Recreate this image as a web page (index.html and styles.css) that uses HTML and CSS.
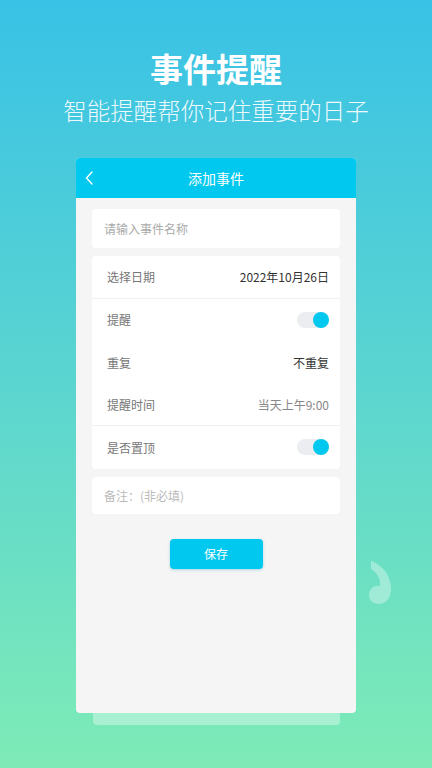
FILE: index.html
```html
<!DOCTYPE html>
<html lang="zh-CN">
<head>
    <meta charset="UTF-8">
    <title>事件提醒</title>
    <link rel="stylesheet" href="styles.css">
</head>
<body>
    <div class="page">
        <div class="hero">
            <h1 class="hero-title">事件提醒</h1>
            <p class="hero-sub">智能提醒帮你记住重要的日子</p>
        </div>

        <div class="phone">
            <div class="card">
                <div class="card-header">
                    <svg class="back" width="9" height="14" viewBox="0 0 9 14">
                        <path d="M7 1 L1.5 7 L7 13" fill="none" stroke="#fff" stroke-width="1.4" stroke-linecap="round" stroke-linejoin="round"/>
                    </svg>
                    <span class="card-title">添加事件</span>
                </div>
                <div class="card-body">
                    <div class="box name-box">请输入事件名称</div>

                    <div class="box group">
                        <div class="row bordered">
                            <span class="label">选择日期</span>
                            <span class="value">2022年10月26日</span>
                        </div>
                        <div class="row">
                            <span class="label">提醒</span>
                            <span class="toggle"><span class="knob"></span></span>
                        </div>
                        <div class="row">
                            <span class="label">重复</span>
                            <span class="value">不重复</span>
                        </div>
                        <div class="row bordered">
                            <span class="label">提醒时间</span>
                            <span class="value muted">当天上午9:00</span>
                        </div>
                        <div class="row">
                            <span class="label">是否置顶</span>
                            <span class="toggle"><span class="knob"></span></span>
                        </div>
                    </div>

                    <div class="box note-box">备注：(非必填)</div>

                    <button class="save">保存</button>
                </div>
            </div>
            <div class="card-under"></div>
        </div>

        <svg class="note" width="26" height="46" viewBox="0 0 26 46">
            <path d="M2 2 C14 6 23 18 22 32 C21 40 16 45 10 45 C4 45 0 41 0 36 C0 30 5 26 11 27 C12 20 8 14 2 10 Z" fill="rgba(255,255,255,0.35)"/>
        </svg>
    </div>
</body>
</html>
```

FILE: styles.css
```css
body {
    margin: 0;
    font-family: "Noto Sans CJK SC", "Noto Sans", sans-serif;
}
.page {
    position: relative;
    height: 768px;
    background: linear-gradient(180deg, #39c2e6 0%, #5bd5d0 50%, #7eebb6 100%);
    overflow: hidden;
}
.hero {
    padding-top: 48px;
    text-align: center;
    color: #fff;
}
.hero-title {
    margin: 0;
    font-size: 33px;
    line-height: 40px;
    font-weight: 700;
}
.hero-sub {
    margin: 7px 0 0;
    font-size: 23.5px;
    line-height: 30px;
    font-weight: 300;
    color: rgba(255, 255, 255, 0.92);
}
.phone {
    margin-top: 33px;
    display: flex;
    flex-direction: column;
    align-items: center;
}
.card {
    width: 280px;
    height: 555px;
    background-color: #f5f5f5;
    border-radius: 4px;
    overflow: hidden;
}
.card-header {
    position: relative;
    height: 40px;
    background-color: #00c8ee;
    display: flex;
    align-items: center;
    justify-content: center;
}
.back {
    position: absolute;
    left: 9px;
    top: 13px;
}
.card-title {
    color: #fff;
    font-size: 14px;
}
.card-body {
    padding: 11px 16px 0;
    display: flex;
    flex-direction: column;
    gap: 8px;
}
.box {
    background-color: #fff;
    border-radius: 4px;
}
.name-box {
    height: 39px;
    line-height: 39px;
    padding-left: 12px;
    font-size: 12px;
    color: #aaa;
}
.row {
    height: 42.5px;
    padding: 0 11px 0 15px;
    display: flex;
    align-items: center;
    justify-content: space-between;
    font-size: 12px;
}
.row.bordered {
    border-bottom: 1px solid #f1f1f1;
    height: 41.5px;
}
.label {
    color: #777;
}
.value {
    color: #333;
}
.value.muted {
    color: #888;
}
.toggle {
    width: 32px;
    height: 16px;
    border-radius: 8px;
    background-color: #ebedf1;
    display: flex;
    justify-content: flex-end;
}
.knob {
    width: 16px;
    height: 16px;
    border-radius: 50%;
    background-color: #00c8ee;
}
.note-box {
    height: 37px;
    line-height: 37px;
    padding-left: 12px;
    font-size: 12px;
    color: #bbb;
}
.save {
    align-self: center;
    margin-top: 17px;
    width: 93px;
    height: 30px;
    border: none;
    border-radius: 4px;
    background-color: #00c8ee;
    color: #fff;
    font-family: inherit;
    font-size: 12px;
    box-shadow: 0 1px 3px rgba(0, 150, 190, 0.3);
}
.card-under {
    width: 247px;
    height: 12px;
    background-color: rgba(255, 255, 255, 0.35);
    border-radius: 0 0 4px 4px;
}
.note {
    position: absolute;
    left: 369px;
    top: 559px;
}
```
